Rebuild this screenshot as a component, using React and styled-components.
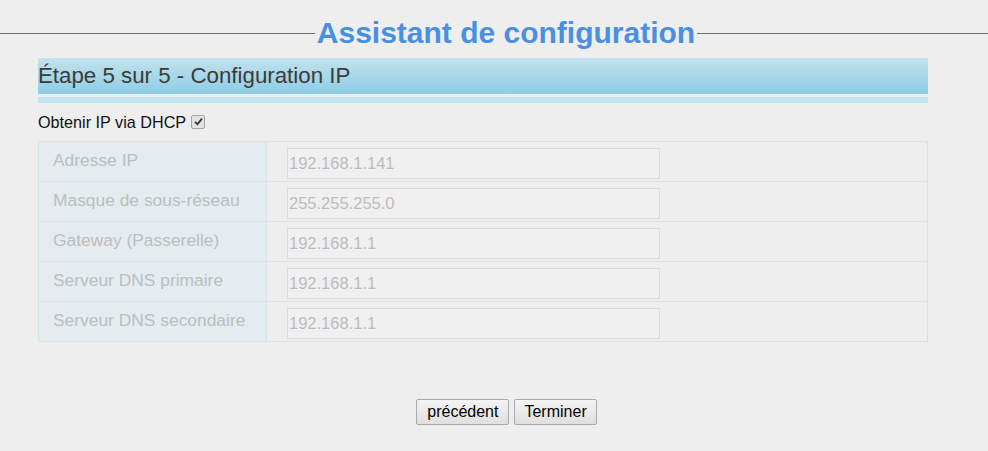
import React from "react";
import styled, { createGlobalStyle } from "styled-components";

const Global = createGlobalStyle`
  html, body { margin: 0; padding: 0; background: #eeeeee; }
  body { font-family: "Liberation Sans", Arial, sans-serif; }
`;

const Page = styled.div`
  width: 988px;
  height: 451px;
  background: #eeeeee;
  box-sizing: border-box;
  padding-top: 14px;
  overflow: hidden;
`;

const TitleRow = styled.div`
  display: flex;
  align-items: center;
  width: 1012px;
  height: 38px;
`;

const Rule = styled.div`
  flex: 1;
  height: 1px;
  background: #6f6f6f;
  margin-top: 1px;
`;

const Title = styled.h1`
  margin: 0 2px;
  font-size: 30px;
  font-weight: bold;
  color: #4a90e2;
  line-height: 38px;
  white-space: nowrap;
`;

const Content = styled.div`
  margin: 6px 60px 0 38px;
  width: 890px;
`;

const StepBar = styled.div`
  height: 36px;
  background: linear-gradient(#c2e2ec, #8ecde5);
  color: #3b3b3b;
  font-size: 22.3px;
  line-height: 36px;
  white-space: nowrap;
`;

const StepStrip = styled.div`
  height: 6px;
  margin-top: 3px;
  background: #c0e6f2;
`;

const DhcpRow = styled.div`
  display: flex;
  align-items: center;
  gap: 5px;
  height: 20px;
  margin-top: 9px;
  font-size: 16.2px;
  color: #111;
`;

const FakeCheck = styled.span`
  width: 12px;
  height: 12px;
  border: 1px solid #a5a5a5;
  border-radius: 2px;
  background: #e2e2e2;
  display: inline-flex;
  align-items: center;
  justify-content: center;
  margin-top: -1px;
`;

const Table = styled.div`
  margin-top: 9px;
  border: 1px solid #d6e3e7;
  border-bottom: none;
`;

const Row = styled.div`
  display: flex;
  height: 39px;
  border-bottom: 1px solid #d6e3e7;
`;

const Label = styled.div`
  width: 213px;
  padding-left: 14px;
  background: #e4ecf0;
  border-right: 1px solid #d6e3e7;
  color: #bdbdbd;
  font-size: 17.4px;
  line-height: 37px;
  white-space: nowrap;
`;

const Cell = styled.div`
  flex: 1;
  display: flex;
  align-items: center;
  padding-left: 20px;
  padding-top: 3px;
  background: #eeeeee;
`;

const Input = styled.input`
  box-sizing: border-box;
  width: 373px;
  height: 31px;
  border: 1px solid #dcdcdc;
  background: #f0f0f0;
  color: #bcbcbc;
  font-family: "Liberation Sans", Arial, sans-serif;
  font-size: 16.5px;
  padding: 0 1px;
  outline: none;
  &:disabled { color: #bcbcbc; }
`;

const Buttons = styled.div`
  display: flex;
  justify-content: center;
  gap: 5px;
  margin-top: 57px;
  padding-left: 47px;
`;

const Button = styled.button`
  box-sizing: border-box;
  height: 26px;
  padding: 0 ${(p) => p.$pad || 10}px;
  font-family: "Liberation Sans", Arial, sans-serif;
  font-size: 16px;
  color: #000;
  background: linear-gradient(#f4f4f4, #dfdfdf);
  border: 1px solid #a9a9a9;
  border-radius: 2px;
`;

const fields = [
  ["Adresse IP", "192.168.1.141"],
  ["Masque de sous-réseau", "255.255.255.0"],
  ["Gateway (Passerelle)", "192.168.1.1"],
  ["Serveur DNS primaire", "192.168.1.1"],
  ["Serveur DNS secondaire", "192.168.1.1"],
];

export default function App() {
  return (
    <Page>
      <Global />
      <TitleRow>
        <Rule />
        <Title>Assistant de configuration</Title>
        <Rule />
      </TitleRow>
      <Content>
        <StepBar>Étape 5 sur 5 - Configuration IP</StepBar>
        <StepStrip />
        <DhcpRow>
          <span>Obtenir IP via DHCP</span>
          <FakeCheck>
            <svg width="9" height="9" viewBox="0 0 9 9">
              <path d="M1 4.8 L3.4 7.2 L8 1.6" fill="none" stroke="#333" strokeWidth="1.8" />
            </svg>
          </FakeCheck>
        </DhcpRow>
        <Table>
          {fields.map(([label, value]) => (
            <Row key={label}>
              <Label>{label}</Label>
              <Cell>
                <Input disabled defaultValue={value} />
              </Cell>
            </Row>
          ))}
        </Table>
        <Buttons>
          <Button>précédent</Button>
          <Button $pad={9}>Terminer</Button>
        </Buttons>
      </Content>
    </Page>
  );
}
